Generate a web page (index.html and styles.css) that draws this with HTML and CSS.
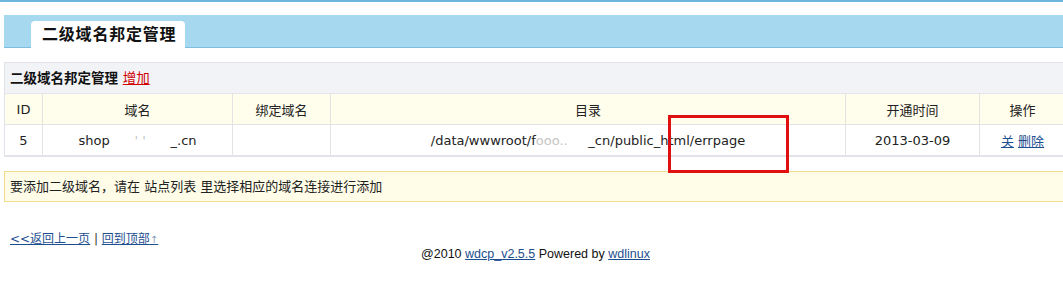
FILE: index.html
```html
<!DOCTYPE html>
<html>
    <head>
        <title>二级域名邦定管理</title>
        <meta charset="utf-8">
        <link rel="stylesheet" href="styles.css">
    </head>
    <body>
        <div class='topline'></div>
        <div class='tabbar'>
            <div class='tab'>二级域名邦定管理</div>
        </div>
        <div class='panel'>
            <div class='panelTitle'>二级域名邦定管理 <a href='#' class='red'>增加</a></div>
            <table class='list'>
                <tr class='head'>
                    <td class='cId'>ID</td>
                    <td class='cDomain'>域名</td>
                    <td class='cBind'>绑定域名</td>
                    <td class='cDir'>目录</td>
                    <td class='cTime'>开通时间</td>
                    <td>操作</td>
                </tr>
                <tr>
                    <td>5</td>
                    <td>shop<span class='hidden'>&nbsp;&nbsp;&nbsp;&nbsp;&nbsp;&nbsp;'&nbsp;'&nbsp;&nbsp;&nbsp;&nbsp;&nbsp;&nbsp;</span>_.cn</td>
                    <td></td>
                    <td>/data/wwwroot/f<span class='hidden'>ooo..&nbsp;&nbsp;&nbsp;&nbsp;&nbsp;</span>_cn/public_html/errpage</td>
                    <td>2013-03-09</td>
                    <td><a href='#'>关</a> <a href='#'>删除</a></td>
                </tr>
            </table>
        </div>
        <div class='notice'>要添加二级域名，请在 站点列表 里选择相应的域名连接进行添加</div>
        <div class='backLinks'><a href='#'>&lt;&lt;返回上一页</a> | <a href='#'>回到顶部<span class='arrow'>↑</span></a></div>
        <div class='footer'>@2010 <a href='#'>wdcp_v2.5.5</a> Powered by <a href='#'>wdlinux</a></div>
        <div class='markBox'></div>
    </body>
</html>
```

FILE: styles.css
```css
body {
    margin: 0;
    font-family: "DejaVu Sans", "Noto Sans CJK SC", sans-serif;
    font-size: 13px;
    color: #222;
    background: white;
    overflow: hidden;
}

a {
    color: #1d4e8f;
}

a.red {
    color: #d00000;
}

.topline {
    height: 2px;
    background: #6fb6dd;
}

.tabbar {
    display: flex;
    align-items: flex-end;
    margin: 13px -4px 0 4px;
    height: 32px;
    background: #a6d9f0;
    border-bottom: 1px solid #7dbde0;
}

.tab {
    margin: 0 0 -1px 27px;
    height: 27px;
    line-height: 27px;
    padding: 0 9px 0 11px;
    background: white;
    border-radius: 4px 4px 0 0;
    font-size: 16px;
    font-weight: bold;
    letter-spacing: 0.8px;
    color: #111;
}

.panel {
    margin: 14px -4px 0 4px;
    border: 1px solid #e0e3ea;
    background: #f2f3f6;
}

.panelTitle {
    height: 30px;
    line-height: 31px;
    padding-left: 5px;
    font-size: 13.5px;
    font-weight: bold;
    color: #111;
}

.panelTitle a {
    font-weight: normal;
}

.list {
    width: 100%;
    border-collapse: collapse;
    table-layout: fixed;
    background: white;
}

.list td {
    height: 30px;
    padding: 0;
    border: 1px solid #e3e3e3;
    text-align: center;
    white-space: nowrap;
}

.list tr:first-child td {
    border-top: 1px solid #e6e6ec;
}

.list td:first-child {
    border-left: none;
}

.head td {
    background: #fffdeb;
}

.cId { width: 37px; }
.cDomain { width: 189px; }
.cBind { width: 97px; }
.cDir { width: 514px; }
.cTime { width: 133px; }

.hidden {
    color: #c4c4c4;
}

.notice {
    margin: 14px -4px 0 4px;
    height: 29px;
    line-height: 29px;
    padding-left: 5px;
    background: #fffde8;
    border: 1px solid #f1dc8e;
}

.backLinks {
    margin: 30px 0 0 10px;
    font-size: 12px;
    line-height: 14px;
    color: #333;
}

.arrow {
    color: #8aa0b8;
    font-size: 10px;
}

.footer {
    text-align: center;
    font-family: "Liberation Sans", sans-serif;
    font-size: 12.5px;
    line-height: 14px;
    color: #111;
    padding-left: 8px;
}

.markBox {
    position: absolute;
    left: 668px;
    top: 115px;
    width: 115px;
    height: 52px;
    border: 3px solid #e01010;
}
```
